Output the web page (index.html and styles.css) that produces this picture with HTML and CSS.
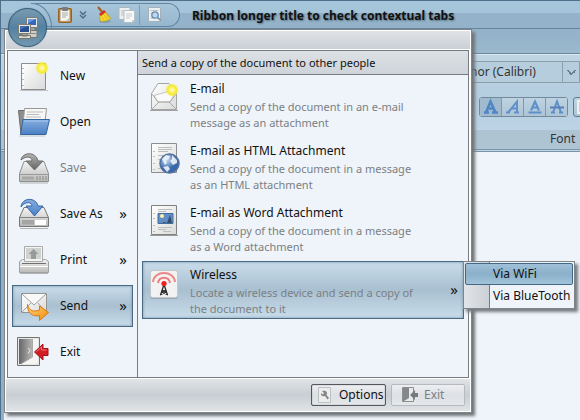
FILE: index.html
```html
<!DOCTYPE html>
<html lang="en">
<head>
<meta charset="utf-8">
<title>Ribbon longer title to check contextual tabs</title>
<link rel="stylesheet" href="styles.css">
</head>
<body>
<svg class="defs" aria-hidden="true">
  <defs>
    <linearGradient id="paper" x1="0" y1="0" x2="1" y2="1"><stop offset="0" stop-color="#fff"/><stop offset="1" stop-color="#d9dbda"/></linearGradient>
    <linearGradient id="metal" x1="0" y1="0" x2="0" y2="1"><stop offset="0" stop-color="#f4f4f4"/><stop offset="1" stop-color="#b9bab8"/></linearGradient>
    <linearGradient id="blue" x1="0" y1="0" x2="0" y2="1"><stop offset="0" stop-color="#86aee0"/><stop offset="1" stop-color="#4b7fc3"/></linearGradient>
    <linearGradient id="grey" x1="0" y1="0" x2="0" y2="1"><stop offset="0" stop-color="#b5b5b5"/><stop offset="1" stop-color="#626262"/></linearGradient>
    <linearGradient id="orange" x1="0" y1="0" x2="1" y2="1"><stop offset="0" stop-color="#fbd78c"/><stop offset="1" stop-color="#f58a00"/></linearGradient>
    <linearGradient id="door" x1="0" y1="0" x2="1" y2="0"><stop offset="0" stop-color="#666"/><stop offset="1" stop-color="#b4b4b4"/></linearGradient>
    <radialGradient id="star"><stop offset="0" stop-color="#fffde0"/><stop offset=".35" stop-color="#fff36a"/><stop offset=".65" stop-color="#f6e92c"/><stop offset="1" stop-color="#f6ee50" stop-opacity="0"/></radialGradient>
    <radialGradient id="globe" cx=".35" cy=".3"><stop offset="0" stop-color="#c4dcf5"/><stop offset="1" stop-color="#3969a9"/></radialGradient>
  </defs>
</svg>
<div class="window">
  <header class="titlebar">
    <div class="quick">
      <button class="tool" aria-label="Paste"><svg width="16" height="18" viewBox="0 0 16 18"><rect x="1.500" y="2.500" width="13" height="14" rx="1" fill="#b98037" stroke="#916126"/><path d="M3.500 4h9v11h-9z" fill="#f3f3ef" stroke="#c9c9c5" stroke-width=".6"/><path d="M5 7h6M5 9h6M5 11h4" stroke="#aaa"/><rect x="5" y="1" width="6" height="4" rx="1" fill="#777d80"/><path d="M9 15l3.500-3.500v3.500z" fill="#bfc3c5"/></svg></button>
      <button class="tool drop" aria-label="Paste options"><svg width="8" height="8" viewBox="0 0 8 8"><path d="M1 .5l3 3 3-3M1 4l3 3 3-3" fill="none" stroke="#4b6a84" stroke-width="1.300"/></svg></button>
      <button class="tool" aria-label="Clear"><svg width="16" height="18" viewBox="0 0 16 18"><path d="M2 1l5 6" stroke="#a65e17" stroke-width="2"/><ellipse cx="9" cy="15.500" rx="6" ry="1.500" fill="#536b7a" opacity=".35"/><path d="M3.500 8l5-3 6.500 7.500-3 1.500-2 1-5 .5-1-2z" fill="#f6d72f" stroke="#c19b12" stroke-width=".7"/><path d="M3 8l5-4 2 2-5 4z" fill="#d4332a"/><path d="M6 11l2 3M8 9l3 4M10 8l3 4" stroke="#d0ab18" stroke-width=".7"/></svg></button>
      <button class="tool" aria-label="Copy"><svg width="18" height="18" viewBox="0 0 18 18"><path d="M1 1.500h11v12H1z" fill="#edf0f1" stroke="#abb7bf"/><path d="M3 5h5M3 7h4M3 9h4" stroke="#b9bec1"/><path d="M6 4.500h10.500v10L14 16.500H6z" fill="#f8f8f8" stroke="#b6bfc4"/><path d="M8 8h6M8 10h6M8 12h4" stroke="#c5c9cb"/><path d="M14 16.500v-2.500h2.500z" fill="#c8cdd0"/></svg></button>
      <span class="quick-sep"></span>
      <button class="tool" aria-label="Print preview"><svg width="16" height="18" viewBox="0 0 16 18"><path d="M1.500 1.500h12v14h-12z" fill="#eceff0" stroke="#a5b2bb"/><path d="M3.500 4.500h8M3.500 7h3M3.500 12h4" stroke="#bcc3c7"/><circle cx="8" cy="9" r="3.200" fill="#bdd8ef" stroke="#638caf" stroke-width="1.300"/><path d="M10.500 11.500l3.500 3" stroke="#7f9db4" stroke-width="2"/></svg></button>
    </div>
    <h1 class="title">Ribbon longer title to check contextual tabs</h1>
  </header>
  <div class="tabstrip"></div>
  <section class="ribbon">
    <div class="controls">
      <select class="font-select" aria-label="Font family"><option>Minor (Calibri)</option></select>
      <div class="format-row">
        <div class="format-group">
          <button class="format on" aria-label="Bold"><svg width="16" height="16" viewBox="0 0 16 16"><path d="M1 13.500h5M9 13.500h6M3 13.500L7.500 2.500 12.500 13.500M5 9.500h6" fill="none" stroke="#4f86c5" stroke-width="2.600"/></svg></button>
          <button class="format" aria-label="Italic"><svg width="16" height="16" viewBox="0 0 16 16"><path d="M1 13.500h4M9 13.500h5M3 13.500L12 2.500v11M6 9.500h6" fill="none" stroke="#6191c8" stroke-width="2"/></svg></button>
          <button class="format" aria-label="Underline"><svg width="16" height="16" viewBox="0 0 16 16"><path d="M4 11.500L8 2.500 12 11.500M5.500 8.500h5" fill="none" stroke="#5d8fca" stroke-width="2"/><path d="M1.500 13.500h13" stroke="#5d8fca" stroke-width="2"/></svg></button>
          <button class="format" aria-label="Strikethrough"><svg width="16" height="16" viewBox="0 0 16 16"><path d="M2 13.500h4M10 13.500h4M4 13.500L8 2.500 12 13.500" fill="none" stroke="#5d8fca" stroke-width="2"/><path d="M1 8.500h14" stroke="#5580b8" stroke-width="2"/></svg></button>
        </div>
        <button class="format more" aria-label="Text alignment"><svg width="16" height="16" viewBox="0 0 16 16"><path d="M1 1h14v14H1z" fill="#edf0f1"/><path d="M3 4h9M3 6h9M3 8h9M3 10h9M3 12h9" stroke="#abb3b8"/></svg></button>
      </div>
    </div>
    <footer class="group-label">Font</footer>
  </section>
  <main class="document"></main>

  <div class="app-menu">
    <div class="menu-panes">
      <nav class="commands" aria-label="Application menu">
        <button class="command"><svg width="32" height="32" viewBox="0 0 32 32"><path d="M2 30h28v1H2z" fill="#85888a" opacity=".45"/><path d="M3.500 3.500h24v26h-24z" fill="url(#paper)" stroke="#8b8e8c"/><path d="M5.500 5v23" stroke="#fff"/><path d="M5 8v1M5 13v1M5 19v1M5 25v1" stroke="#777"/><circle cx="24" cy="8" r="7" fill="url(#star)"/></svg><span>New</span></button>
        <button class="command"><svg width="32" height="32" viewBox="0 0 32 32"><path d="M.5 4.500h8l2 3h16v19L3 28z" fill="#8c8e8d" stroke="#686b69"/><path d="M6.500 2.500h22l-2 18H5z" fill="#f7f7f6" stroke="#999"/><path d="M9 6h16M8.500 8.500H21M8 11h15" stroke="#bbb"/><path d="M5 13.500h26.500L28 28.500H2.500z" fill="url(#blue)" stroke="#34659f"/><path d="M6 15h24" stroke="#a6c7ee"/><path d="M1 30h26" stroke="#6d7375" opacity=".35"/></svg><span>Open</span></button>
        <button class="command" disabled><svg width="32" height="32" viewBox="0 0 32 32"><path d="M6 9.500h20l4.500 12v8h-29v-8z" fill="url(#metal)" stroke="#8d8f8e"/><path d="M1.500 22.500h29" stroke="#999"/><path d="M4 24.500h12v3H4z" fill="#a7a8a7"/><path d="M19 24v4M22 24v4M25 24v4M28 24v4" stroke="#888"/><path d="M2 31h28" stroke="#777" opacity=".5"/><path d="M3 8C4 0 18-1 20 9h5l-8.500 9L8 9h6C14 5 9 3 3 8z" fill="url(#grey)" stroke="#6d6d6d"/></svg><span>Save</span></button>
        <button class="command"><svg width="32" height="32" viewBox="0 0 32 32"><path d="M6 9.500h20l4.500 10v9h-29v-9z" fill="url(#metal)" stroke="#747775"/><path d="M1.500 19.500h29" stroke="#808381"/><path d="M4 22h12v4.500H4z" fill="#a2a5a4"/><path d="M17 22h11v5H17z" fill="#fff"/><path d="M2 30.500h28" stroke="#777" opacity=".5"/><path d="M3 9C4-1 18-1 20 8h5l-8.500 10L8 8h6C14 4 7 3 3 9z" fill="url(#blue)" stroke="#3568ac"/></svg><span>Save As</span><span class="more-mark">»</span></button>
        <button class="command"><svg width="32" height="32" viewBox="0 0 32 32"><path d="M1.500 17.500l3-2h23l3 2v11h-29z" fill="url(#metal)" stroke="#a0a2a1"/><path d="M6.500 2.500h18v15h-18z" fill="#f4f5f4" stroke="#a9abaa"/><path d="M8 4h15v11H8z" fill="#d0d2d2"/><path d="M15.500 5l5 5H18v5h-5v-5h-2.500z" fill="#979b9a"/><path d="M4 19.500h24" stroke="#6d706f"/><path d="M2 22.500h28" stroke="#fff"/><path d="M2 29.500h28" stroke="#777" opacity=".5"/></svg><span>Print</span><span class="more-mark">»</span></button>
        <button class="command selected"><svg width="32" height="32" viewBox="0 0 32 32"><path d="M3.500 3.500h25v19h-25z" fill="url(#paper)" stroke="#939694"/><path d="M4 22l9-9M28 22l-8-9" stroke="#a6a8a7"/><path d="M4 4l12 11L28 4" fill="#f8f8f8" stroke="#a0a2a1"/><path d="M9.500 14.500c2 7 6 7.500 12 5.500v-4l9 6.500-9 8v-5C15 27 9 23 9.500 14.500z" fill="url(#orange)" stroke="#de7908"/></svg><span>Send</span><span class="more-mark">»</span></button>
        <button class="command"><svg width="32" height="32" viewBox="0 0 32 32"><path d="M-.5 1.500h22v28h-22z" fill="#e7e8e6" stroke="#707572"/><path d="M1 3h13v20L3 28H1z" fill="url(#door)"/><path d="M3 28l11-7V3h6v23l-3 2z" fill="#f5f5f3"/><path d="M14.500 3v18L3 28" fill="none" stroke="#aaa"/><path d="M10 12l2 2.500-2 3" stroke="#eee" fill="none"/><path d="M16.500 16l8.500-8v4.500h5v7h-5V24z" fill="#d21d25" stroke="#9f151b"/><path d="M18.500 15.500l5-4.500v3h5" fill="none" stroke="#ee7879"/></svg><span>Exit</span></button>
      </nav>
      <section class="details">
        <h2 class="details-title">Send a copy of the document to other people</h2>
        <button class="choice"><svg width="32" height="32" viewBox="0 0 32 32"><path d="M3.500 12.500L10 2.500h11l7.500 10v16h-25z" fill="url(#paper)" stroke="#a3a5a3"/><path d="M6 14.500L22 10l4 4-4 7H10z" fill="#fafafa" stroke="#c2c3c2"/><path d="M4 13l6 8h12l6-8M4 28l7-7M28 28l-7-7" fill="none" stroke="#a9abaa"/><path d="M2 29.500h28" stroke="#777" opacity=".65"/><circle cx="24" cy="9" r="7" fill="url(#star)"/></svg><span><strong>E-mail</strong><small>Send a copy of the document in an e-mail<br>message as an attachment</small></span></button>
        <button class="choice"><svg width="32" height="32" viewBox="0 0 32 32"><path d="M3.500.5h25v29h-25z" fill="url(#paper)" stroke="#8b8e8c"/><path d="M6 8v1M6 13v1M6 20v1M6 26v1" stroke="#888"/><path d="M10 4.500h14M10 6.500h14M10 8.500h10M10 12.500h8M10 16.500h3M10 25.500h3" stroke="#bcbebd"/><circle cx="21.500" cy="20.500" r="9.500" fill="url(#globe)" stroke="#54709f" stroke-width="1.500"/><path d="M14 16l4-4 4 1-1 3-3 1 1 3-2 2zM24 12l5 5v3l-4 2-3-4 2-2zM15 24l5-1 2 3-3 3z" fill="#edf3f8" opacity=".9"/></svg><span><strong>E-mail as HTML Attachment</strong><small>Send a copy of the document in a message<br>as an HTML attachment</small></span></button>
        <button class="choice"><svg width="32" height="32" viewBox="0 0 32 32"><path d="M2 30.500h28" stroke="#999"/><path d="M3.500.5h25v29h-25z" fill="url(#paper)" stroke="#7f8280"/><path d="M6 8v1M6 13v1M6 20v1M6 26v1" stroke="#888"/><path d="M10 4.500h14M10 6.500h8M10 22.500h14M10 24.500h8M15 26.500h8" stroke="#bcbebd"/><path d="M10 8.500h15v10H10z" fill="#628ec5" stroke="#426d9f"/><circle cx="14" cy="11" r="2" fill="#fbf4a2"/><path d="M11 18h3l2-1 3 1 3-8 2 8H11z" fill="#334e68"/></svg><span><strong>E-mail as Word Attachment</strong><small>Send a copy of the document in a message<br>as a Word attachment</small></span></button>
        <button class="choice selected"><svg width="32" height="32" viewBox="0 0 32 32"><rect x="2" y="4" width="28" height="28" rx="2" fill="#7b8790" opacity=".5"/><rect x="2.500" y="3.500" width="27" height="27" rx="2" fill="#f2f2f2" stroke="#c4c9cc"/><g fill="none" stroke="#eb5658" stroke-width="2"><path d="M5 15c1-12 21-12 22 0" opacity=".7"/><path d="M10 16c1-7 11-7 12 0" opacity=".75"/></g><circle cx="16" cy="16.500" r="2.600" fill="#f11d22"/><path d="M15.500 19l-3 9M16.500 19l3 9M14 23l4 2-6 3M18 23l-4 2 6 3" fill="none" stroke="#292929" stroke-width="1.300"/></svg><span><strong>Wireless</strong><small>Locate a wireless device and send a copy of<br>the document to it</small></span><span class="more-mark">»</span></button>
      </section>
    </div>
    <footer class="menu-footer">
      <button class="action primary"><svg width="16" height="16" viewBox="0 0 16 16"><path d="M1.500.5h12v15h-12z" fill="#ededed" stroke="#bec1c2"/><path d="M5 4c4-1 6 1 4.500 4l2.500 3-1.500 1.500L8 9c-3 1-4.500-1-4-3l2 1.500L7 6z" fill="#828688"/></svg><span>Options</span></button>
      <button class="action" disabled><svg width="16" height="16" viewBox="0 0 16 16"><path d="M.5.500h11v14H.5z" fill="#e8e9e9" stroke="#8c8f91"/><path d="M1 1h6v10l-5 3H1z" fill="#858789"/><path d="M8 8l5-5v3h3v4h-3v3z" fill="#777a7c"/></svg><span>Exit</span></button>
    </footer>
    <div class="submenu">
      <button class="sub-item active">Via WiFi</button>
      <button class="sub-item">Via BlueTooth</button>
    </div>
  </div>

  <button class="orb" aria-label="Application menu"><svg width="20" height="22" viewBox="0 0 20 22"><path d="M8.500.5h11v10h-11z" fill="#e5e7e6" stroke="#817c70"/><path d="M10 2h8v6h-8z" fill="#3267bc"/><path d="M10 2h8l-8 4z" fill="#6c9cdf"/><path d="M12 11h5v2h-5zM9 13.500h10v7H9z" fill="#cfd0cb" stroke="#77766e"/><path d="M12 16.500h6" stroke="#8a8a82"/><path d="M.5 7.500h12v9H.5z" fill="#e5e7e6" stroke="#817c70"/><path d="M2 9h9v6H2z" fill="#294e91"/><path d="M2 9h8l-8 4z" fill="#466db1"/><path d="M4 17h5v2H4zM.5 18.500h12v3H.5z" fill="#d8d8d3" stroke="#77766e"/></svg></button>
</div>
</body>
</html>
```

FILE: styles.css
```css
* {
  box-sizing: border-box;
}

body {
  margin: 0;
  font: 12px/16px "Noto Sans", "Open Sans", sans-serif;
  color: #111;
}

button,
select {
  margin: 0;
  padding: 0;
  border: 0;
  background: none;
  font: inherit;
  color: inherit;
  text-align: left;
}

svg {
  display: block;
  flex: none;
  overflow: visible;
}

.defs {
  position: absolute;
  width: 0;
  height: 0;
}

.window {
  position: relative;
  display: flex;
  flex-direction: column;
  min-height: 100vh;
  overflow: hidden;
  border-top: 1px solid #4f6f8b;
  border-left: 1px solid #4f6f8b;
  background: linear-gradient(90deg, #8fb0ca 3px, #eef4f9 3px);
}

.titlebar {
  display: flex;
  align-items: center;
  height: 28px;
  padding-left: 34px;
  border-bottom: 1px solid #66859d;
  background: linear-gradient(#a5c5da 0 12px, #94b3ca 12px);
}

.quick {
  position: relative;
  display: flex;
  align-items: center;
  gap: 6px;
  width: 145px;
  height: 24px;
  padding-left: 22px;
  border: 1px solid #5f85a1;
  border-left: 0;
  border-radius: 0 12px 12px 0;
  background: linear-gradient(#a7c6db, #96b6cd);
}

.quick::before {
  content: "";
  position: absolute;
  top: -1px;
  left: -4px;
  width: 20px;
  height: 24px;
  border: solid #5f85a1;
  border-width: 1px 1px 0 0;
  border-top-right-radius: 20px 24px;
}

.quick .drop {
  margin-right: 3px;
}

.quick-sep {
  width: 1px;
  height: 20px;
  margin: 0 1px 0 -3px;
  background: #7e9db3;
}

.title {
  margin: 2px 0 0 12px;
  font-size: 12px;
  line-height: 16px;
  white-space: nowrap;
  text-shadow: 1px 1px 2px #566d7e;
}

.tabstrip {
  height: 25px;
  background: linear-gradient(#93b2c9, #9ab9ce);
  border-bottom: 1px solid #6888a0;
}

.ribbon {
  height: 98px;
  border-top: 1px solid #dce9f1;
  border-bottom: 3px double #7895a9;
  background: linear-gradient(#bfd5e4, #b4cddf 40px, #bfd7e8);
}

.controls {
  height: 75px;
  padding: 6px 0 0 450px;
}

.font-select {
  appearance: none;
  display: block;
  width: 100%;
  height: 22px;
  padding-left: 4px;
  border: 1px solid #8ba0af;
  color: #333;
  background:
    linear-gradient(#8ba0af, #8ba0af) right 16px top / 1px 100% no-repeat,
    linear-gradient(45deg, transparent 40%, #667f92 40% 64%, transparent 64%) right 7px top 8px / 5px 5px no-repeat,
    linear-gradient(-45deg, transparent 40%, #667f92 40% 64%, transparent 64%) right 3px top 8px / 5px 5px no-repeat,
    #b6cddd;
}

.format-row {
  display: flex;
  gap: 5px;
  margin: 14px 0 0 28px;
}

.format-group {
  display: flex;
  flex: none;
  border: 1px solid #718a9e;
  border-radius: 3px;
}

.format {
  display: flex;
  align-items: center;
  justify-content: center;
  width: 22px;
  height: 18px;
  border-left: 1px solid #8299aa;
  background: linear-gradient(#bfd3e1, #adc4d5);
}

.format.on {
  width: 21px;
  border-left: 0;
  background: #a1bacd;
}

.format.more {
  flex: none;
  height: 20px;
  border: 1px solid #657b8c;
  border-radius: 3px;
}

.group-label {
  height: 19px;
  padding: 1px 0 0 549px;
  background: #aec4d2;
  color: #333;
}

.document {
  flex: 1;
}

.orb {
  position: absolute;
  top: 7px;
  left: 7px;
  display: grid;
  place-items: center;
  width: 39px;
  height: 39px;
  border: 1px solid #2f5875;
  border-radius: 50%;
  background: linear-gradient(#789bb3, #55819f 50%, #7299b2);
  box-shadow: 0 0 1px #2f5875;
}

.app-menu {
  position: absolute;
  top: 28px;
  left: 3px;
  padding: 20px 2px 0;
  border: 1px solid #7f8488;
  background: linear-gradient(#e1e4e8, #cbd0d6 19px, #cbd0d6);
  box-shadow: inset 0 0 0 1px #fff, 3px 3px 3px #6f7479;
}

.menu-panes {
  display: grid;
  grid-template-columns: 130px 330px;
  border: 1px solid #777c81;
  background: #eef4f9;
  box-shadow: 0 0 0 1px #fff;
}

.commands {
  display: flex;
  flex-direction: column;
  gap: 4px;
  padding: 4px;
  border-right: 1px solid #777c81;
}

.command {
  display: flex;
  align-items: center;
  gap: 10px;
  height: 42px;
  padding: 0 5px;
  border: 1px solid transparent;
}

.command:disabled,
.action:disabled {
  color: #7c7f82;
}

.more-mark {
  margin-left: auto;
  padding-bottom: 3px;
  font-size: 15px;
}

.details {
  display: flex;
  flex-direction: column;
  gap: 4px;
}

.details-title {
  height: 24px;
  margin: 0 0 -4px;
  padding: 4px;
  border-bottom: 1px solid #777c81;
  background: linear-gradient(#dde1e5, #ced4da);
  font-size: 11px;
  font-weight: 400;
  line-height: 16px;
}

.choice {
  display: flex;
  gap: 10px;
  height: 58px;
  margin: 0 4px;
  padding: 5px;
  border: 1px solid transparent;
  white-space: nowrap;
}

.choice strong,
.choice small {
  display: block;
  font-size: 12px;
  font-weight: 400;
}

.choice small {
  margin-top: 2px;
  color: #7c8084;
  font-size: 11px;
}

.choice .more-mark {
  align-self: center;
}

.selected {
  border-color: #496881;
  background: linear-gradient(#c9dcea, #a9c0d1 50%, #c8dcea);
  box-shadow: inset 0 0 3px #7694aa;
}

.menu-footer {
  display: flex;
  justify-content: flex-end;
  gap: 5px;
  margin: 1px -1px 1px;
  padding: 5px;
  background: linear-gradient(#e1e4e7, #c9ced4 50%, #e0e4e7);
}

.action {
  display: flex;
  align-items: center;
  gap: 6px;
  width: 74px;
  height: 22px;
  padding-left: 10px;
  border: 1px solid #b6babe;
  border-radius: 2px;
  background: linear-gradient(#edeff1, #dde0e4 50%, #e5e8ea);
}

.action.primary {
  width: 75px;
  padding-left: 5px;
  border-color: #54585d;
  box-shadow: inset 0 0 1px #54585d;
}

.submenu {
  position: absolute;
  top: 231px;
  right: -104px;
  display: flex;
  flex-direction: column;
  width: 112px;
  padding: 1px;
  border: 1px solid #7f8488;
  background: linear-gradient(90deg, #e1e4e8, #cbd0d6 25px, #777c81 25px 26px, #eef4f9 26px);
  box-shadow: 3px 3px 3px #777c81;
}

.sub-item {
  height: 22px;
  padding-left: 27px;
  border: 1px solid transparent;
  white-space: nowrap;
}

.sub-item.active {
  border-color: #416985;
  border-radius: 2px;
  background: linear-gradient(#9fc0d8, #8bb0ca 50%, #a2c4da);
}
```
